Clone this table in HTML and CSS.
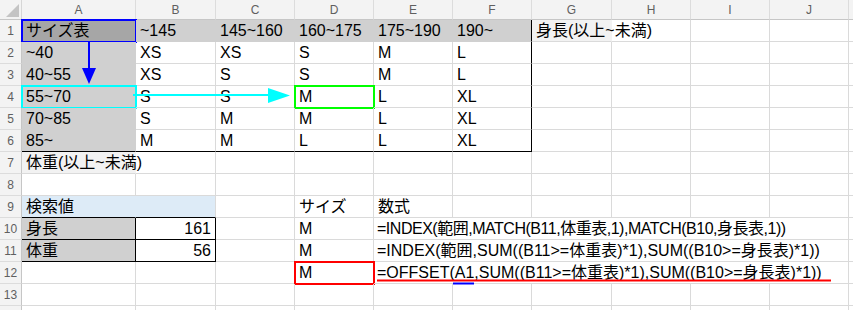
FILE: index.html
```html
<!DOCTYPE html>
<html lang="ja">
<head>
<meta charset="utf-8">
<title>サイズ表</title>
<link rel="stylesheet" href="styles.css">
</head>
<body>
<div class="sheet">
  <div class="grid">
    <div class="corner"><svg width="22" height="20" viewBox="0 0 22 20"><polygon points="19,4 19,17 6,17" fill="#c4c4c4"/></svg></div>
    <div class="ch">A</div><div class="ch">B</div><div class="ch">C</div><div class="ch">D</div><div class="ch">E</div><div class="ch">F</div><div class="ch">G</div><div class="ch">H</div><div class="ch">I</div><div class="ch">J</div><div class="ch"></div>

    <div class="rh">1</div>
    <div class="c dk sel-b">サイズ表</div><div class="c g">~145</div><div class="c g">145~160</div><div class="c g">160~175</div><div class="c g">175~190</div><div class="c g rb">190~</div>
    <div class="c lt nob">身長(以上~未満)</div><div class="c"></div><div class="c"></div><div class="c"></div><div class="c"></div>

    <div class="rh">2</div>
    <div class="c g">~40</div><div class="c">XS</div><div class="c">XS</div><div class="c">S</div><div class="c">M</div><div class="c rb">L</div>
    <div class="c"></div><div class="c"></div><div class="c"></div><div class="c"></div><div class="c"></div>

    <div class="rh">3</div>
    <div class="c g">40~55</div><div class="c">XS</div><div class="c">S</div><div class="c">S</div><div class="c">M</div><div class="c rb">L</div>
    <div class="c"></div><div class="c"></div><div class="c"></div><div class="c"></div><div class="c"></div>

    <div class="rh">4</div>
    <div class="c g sel-c">55~70</div><div class="c">S</div><div class="c">S</div><div class="c sel-g">M</div><div class="c">L</div><div class="c rb">XL</div>
    <div class="c"></div><div class="c"></div><div class="c"></div><div class="c"></div><div class="c"></div>

    <div class="rh">5</div>
    <div class="c g">70~85</div><div class="c">S</div><div class="c">M</div><div class="c">M</div><div class="c">L</div><div class="c rb">XL</div>
    <div class="c"></div><div class="c"></div><div class="c"></div><div class="c"></div><div class="c"></div>

    <div class="rh">6</div>
    <div class="c g bb">85~</div><div class="c bb">M</div><div class="c bb">M</div><div class="c bb">L</div><div class="c bb">L</div><div class="c rb bb">XL</div>
    <div class="c"></div><div class="c"></div><div class="c"></div><div class="c"></div><div class="c"></div>

    <div class="rh">7</div>
    <div class="c lt nob">体重(以上~未満)</div><div class="c"></div><div class="c"></div><div class="c"></div><div class="c"></div><div class="c"></div>
    <div class="c"></div><div class="c"></div><div class="c"></div><div class="c"></div><div class="c"></div>

    <div class="rh">8</div>
    <div class="c"></div><div class="c"></div><div class="c"></div><div class="c"></div><div class="c"></div><div class="c"></div>
    <div class="c"></div><div class="c"></div><div class="c"></div><div class="c"></div><div class="c"></div>

    <div class="rh">9</div>
    <div class="c bl bb">検索値</div><div class="c bl2 bb"></div><div class="c"></div><div class="c">サイズ</div><div class="c">数式</div><div class="c"></div>
    <div class="c"></div><div class="c"></div><div class="c"></div><div class="c"></div><div class="c"></div>

    <div class="rh">10</div>
    <div class="c g bx">身長</div><div class="c num bx">161</div><div class="c"></div><div class="c">M</div>
    <div class="c span6 tight">=INDEX(範囲,MATCH(B11,体重表,1),MATCH(B10,身長表,1))</div><div class="c"></div>

    <div class="rh">11</div>
    <div class="c g bx">体重</div><div class="c num bx">56</div><div class="c"></div><div class="c">M</div>
    <div class="c span6">=INDEX(範囲,SUM((B11&gt;=体重表)*1),SUM((B10&gt;=身長表)*1))</div><div class="c"></div>

    <div class="rh">12</div>
    <div class="c"></div><div class="c"></div><div class="c"></div><div class="c sel-r">M</div>
    <div class="c span6">=OFFSET(A1,SUM((B11&gt;=体重表)*1),SUM((B10&gt;=身長表)*1))</div><div class="c"></div>

    <div class="rh">13</div>
    <div class="c"></div><div class="c"></div><div class="c"></div><div class="c"></div><div class="c"></div><div class="c"></div>
    <div class="c"></div><div class="c"></div><div class="c"></div><div class="c"></div><div class="c"></div>

    <div class="rh"></div>
    <div class="c"></div><div class="c"></div><div class="c"></div><div class="c"></div><div class="c"></div><div class="c"></div>
    <div class="c"></div><div class="c"></div><div class="c"></div><div class="c"></div><div class="c"></div>
  </div>

  <svg class="marks" width="853" height="310" viewBox="0 0 853 310">
    <line x1="89" y1="41" x2="89" y2="70" stroke="#0000ff" stroke-width="2"/>
    <polygon points="82,68 96,68 89,84" fill="#0000ff"/>
    <line x1="133" y1="95" x2="270" y2="95" stroke="#00ffff" stroke-width="2"/>
    <polygon points="268,88 268,103 290,95.5" fill="#00ffff"/>
    <line x1="377" y1="280.5" x2="831" y2="280.5" stroke="#ff0000" stroke-width="2"/>
    <line x1="453" y1="283.5" x2="474" y2="283.5" stroke="#0000ff" stroke-width="2"/>
  </svg>
</div>
</body>
</html>
```

FILE: styles.css
```css
html, body {
  margin: 0;
  padding: 0;
  background: #ffffff;
  overflow: hidden;
}

.sheet {
  position: relative;
  width: 853px;
  height: 310px;
  overflow: hidden;
}

.grid {
  display: grid;
  grid-template-columns: 22px 114px 80px 79px 79px 79px 79px 80px 79px 79px 79px 80px;
  grid-template-rows: 20px repeat(14, 22px);
  font-family: "Liberation Sans", "Noto Sans CJK JP", sans-serif;
  font-size: 16px;
  color: #000000;
}

.corner {
  box-sizing: border-box;
  background: #f3f3f3;
  border-right: 1px solid #d6d6d6;
  border-bottom: 1px solid #c6c6c6;
}

.corner svg {
  display: block;
}

.ch {
  box-sizing: border-box;
  background: #f3f3f3;
  border-right: 1px solid #dcdcdc;
  border-bottom: 1px solid #c6c6c6;
  font-size: 12px;
  line-height: 18px;
  padding-top: 1px;
  text-align: center;
  color: #5f5f5f;
}

.rh {
  box-sizing: border-box;
  background: #f3f3f3;
  border-right: 1px solid #c6c6c6;
  border-bottom: 1px solid #dcdcdc;
  font-size: 12px;
  line-height: 20px;
  padding-top: 1px;
  text-align: center;
  color: #5f5f5f;
}

.c {
  box-sizing: border-box;
  border-right: 1px solid #dadada;
  border-bottom: 1px solid #dadada;
  line-height: 21px;
  padding: 0 3px 0 4px;
  white-space: nowrap;
  min-width: 0;
}

.g {
  background: #d0d0d0;
  border-color: #d0d0d0;
}

.dk {
  background: #a6a6a6;
  border-color: #a6a6a6;
}

.lt {
  background: #f2f2f2;
}

.nob {
  border-right-color: transparent;
  overflow: visible;
}

.bl {
  background: #ddebf7;
  border-right-color: #ddebf7;
}

.bl2 {
  background: #ddebf7;
}

.rb {
  border-right-color: #000000;
}

.bb {
  border-bottom-color: #000000;
}

.bx {
  border-right-color: #000000;
  border-bottom-color: #000000;
}

.num {
  text-align: right;
  padding-right: 4px;
}

.span6 {
  grid-column: span 6;
  padding-left: 3px;
}

.tight {
  letter-spacing: -0.48px;
}

.sel-b,
.sel-c,
.sel-g,
.sel-r {
  outline-width: 2px;
  outline-style: solid;
  outline-offset: -1px;
}

.sel-b { outline-color: #0000ff; }
.sel-c { outline-color: #00ffff; }
.sel-g { outline-color: #00ff00; }
.sel-r { outline-color: #ff0000; }

.marks {
  position: absolute;
  left: 0;
  top: 0;
  pointer-events: none;
}
```
